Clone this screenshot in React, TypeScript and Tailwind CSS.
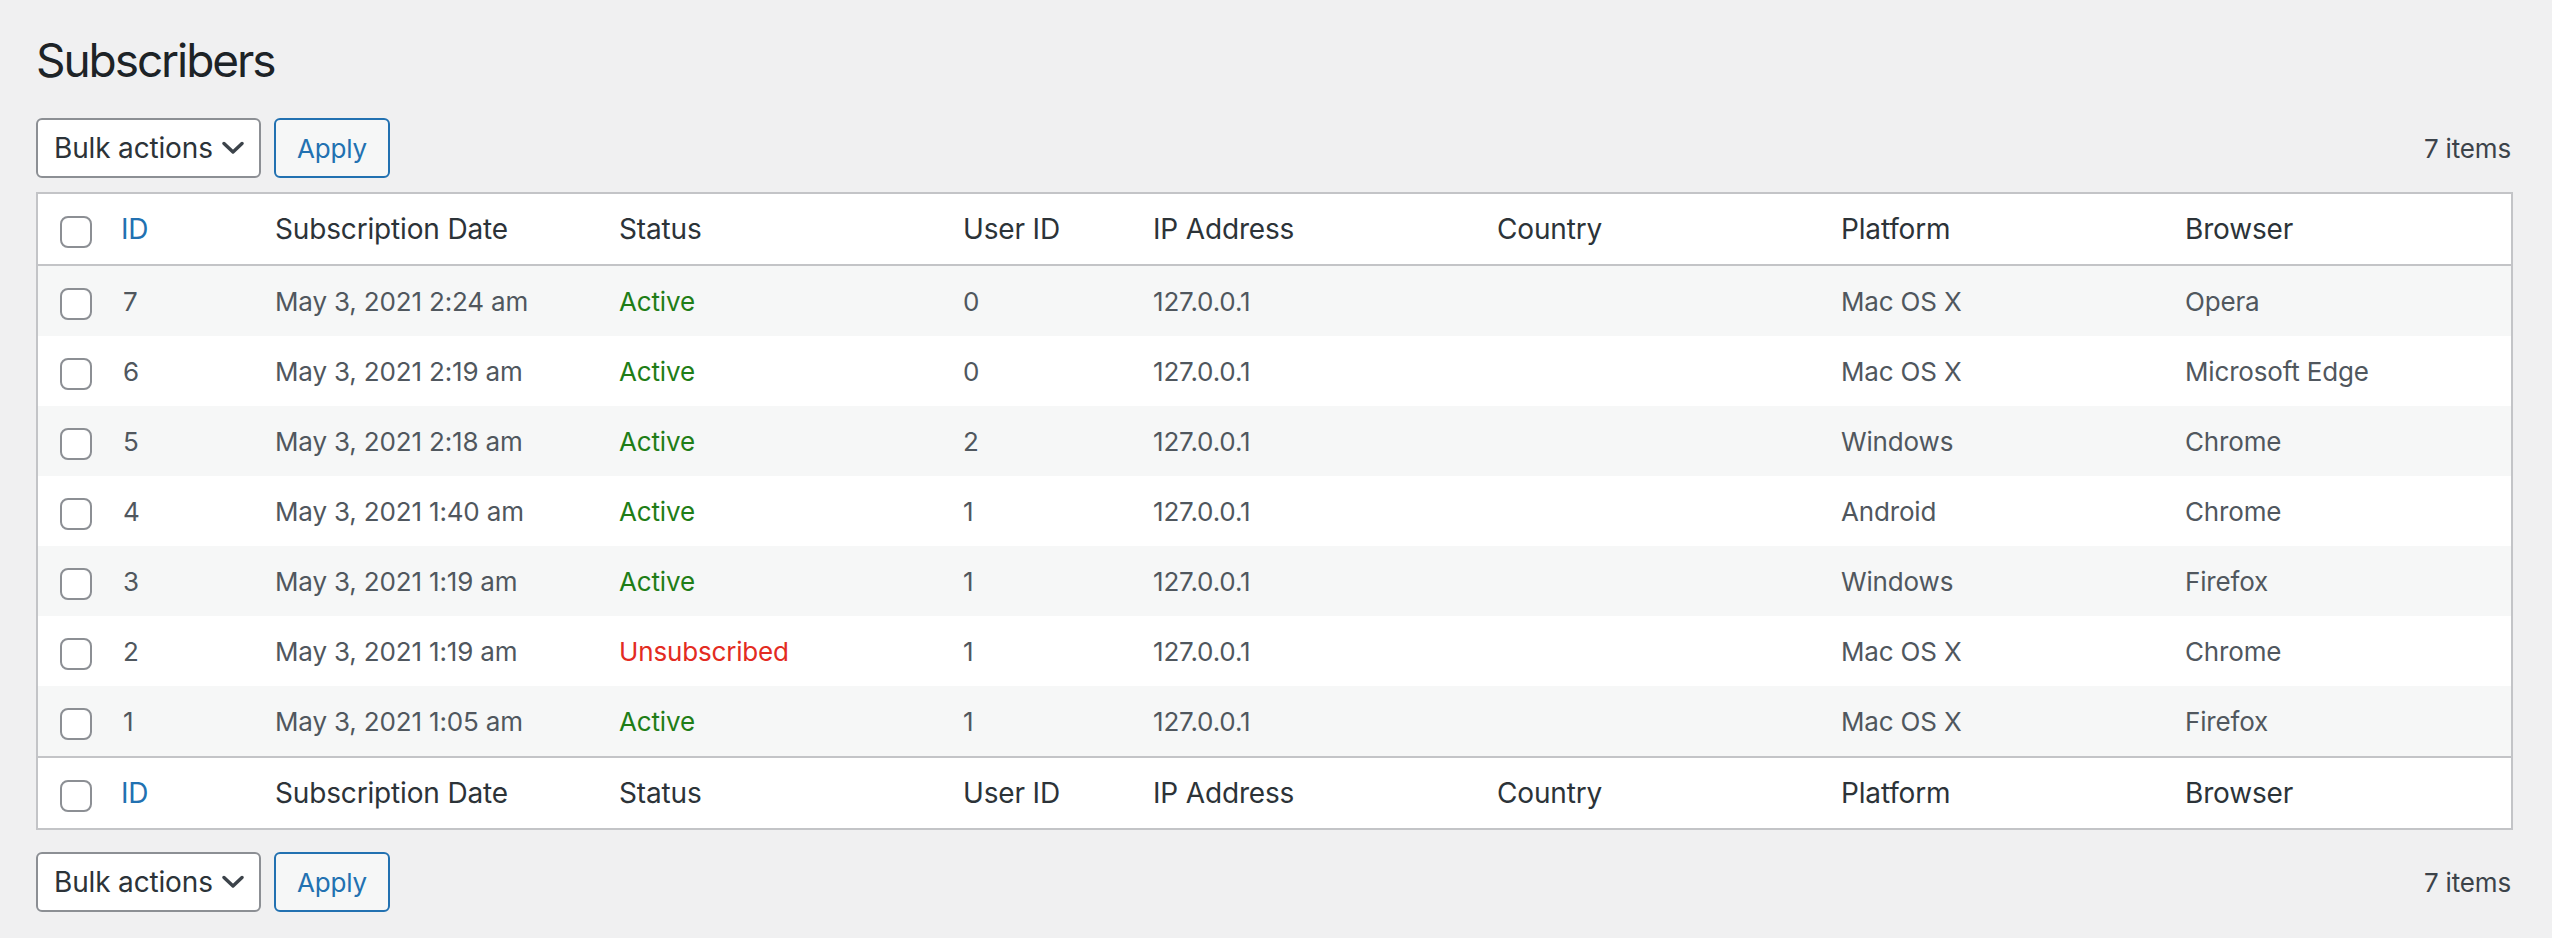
import React from "react";

type Row = {
  id: number;
  date: string;
  status: "Active" | "Unsubscribed";
  user: string;
  ip: string;
  country: string;
  platform: string;
  browser: string;
};

const rows: Row[] = [
  { id: 7, date: "May 3, 2021 2:24 am", status: "Active", user: "0", ip: "127.0.0.1", country: "", platform: "Mac OS X", browser: "Opera" },
  { id: 6, date: "May 3, 2021 2:19 am", status: "Active", user: "0", ip: "127.0.0.1", country: "", platform: "Mac OS X", browser: "Microsoft Edge" },
  { id: 5, date: "May 3, 2021 2:18 am", status: "Active", user: "2", ip: "127.0.0.1", country: "", platform: "Windows", browser: "Chrome" },
  { id: 4, date: "May 3, 2021 1:40 am", status: "Active", user: "1", ip: "127.0.0.1", country: "", platform: "Android", browser: "Chrome" },
  { id: 3, date: "May 3, 2021 1:19 am", status: "Active", user: "1", ip: "127.0.0.1", country: "", platform: "Windows", browser: "Firefox" },
  { id: 2, date: "May 3, 2021 1:19 am", status: "Unsubscribed", user: "1", ip: "127.0.0.1", country: "", platform: "Mac OS X", browser: "Chrome" },
  { id: 1, date: "May 3, 2021 1:05 am", status: "Active", user: "1", ip: "127.0.0.1", country: "", platform: "Mac OS X", browser: "Firefox" },
];

const GRID =
  "grid grid-cols-[63px_154px_344px_344px_190px_344px_344px_344px_1fr]";

function Checkbox() {
  return (
    <span className="mt-[5px] block h-[32px] w-[32px] rounded-[8px] border-2 border-[#8c8f94] bg-white" />
  );
}

function Chevron() {
  return (
    <svg width="22" height="14" viewBox="0 0 22 14" fill="none" className="shrink-0">
      <path d="M2 2.5 L11 11 L20 2.5" stroke="#3c434a" strokeWidth="3.4" strokeLinecap="round" strokeLinejoin="round" />
    </svg>
  );
}

function TableNav() {
  return (
    <div className="flex h-[60px] items-center justify-between">
      <div className="flex items-center gap-[13px]">
        <div className="flex h-[60px] w-[225px] items-center justify-between rounded-[6px] border-2 border-[#8c8f94] bg-white pl-[16px] pr-[15px] text-[28px] text-[#2c3338]">
          <span>Bulk actions</span>
          <Chevron />
        </div>
        <div className="flex h-[60px] items-center rounded-[6px] border-2 border-[#2271b1] bg-[#f6f7f7] px-[21px] text-[26px] text-[#2271b1]">
          Apply
        </div>
      </div>
      <div className="mr-[2px] text-[26px] text-[#3c434a]">7 items</div>
    </div>
  );
}

function HeaderRow({ top }: { top: boolean }) {
  const cls = "flex items-center pl-[20px]";
  return (
    <div
      className={`${GRID} h-[72px] text-[28px] text-[#2c3338] ${
        top ? "border-b-2" : "border-t-2"
      } border-[#c3c4c7]`}
    >
      <div className="flex items-center pl-[22px]">
        <Checkbox />
      </div>
      <div className={`${cls} text-[#2271b1]`}>ID</div>
      <div className={cls}>Subscription Date</div>
      <div className={cls}>Status</div>
      <div className={cls}>User ID</div>
      <div className={cls}>IP Address</div>
      <div className={cls}>Country</div>
      <div className={cls}>Platform</div>
      <div className={cls}>Browser</div>
    </div>
  );
}

export default function App() {
  const cell = "flex items-center pl-[20px]";
  return (
    <div className="min-h-[938px] bg-[#f0f0f1] pl-[36px] pr-[39px] pt-[30px] font-['Inter','Liberation_Sans',sans-serif] tracking-[-0.01em]">
      <h1 className="text-[46px] leading-[60px] font-normal tracking-[-0.045em] text-[#1d2327]">Subscribers</h1>
      <div className="mt-[28px]">
        <TableNav />
      </div>
      <div className="mt-[14px] border-2 border-[#c3c4c7] bg-white">
        <HeaderRow top={true} />
        {rows.map((r, i) => (
          <div
            key={r.id}
            className={`${GRID} h-[70px] text-[26px] text-[#50575e] ${
              i % 2 === 0 ? "bg-[#f6f7f7]" : "bg-white"
            }`}
          >
            <div className="flex items-center pl-[22px]">
              <Checkbox />
            </div>
            <div className="flex items-center pl-[22px]">{r.id}</div>
            <div className={cell}>{r.date}</div>
            <div
              className={`${cell} ${
                r.status === "Active" ? "text-[#1f7d16]" : "text-[#e32b22]"
              }`}
            >
              {r.status}
            </div>
            <div className={cell}>{r.user}</div>
            <div className={cell}>{r.ip}</div>
            <div className={cell}>{r.country}</div>
            <div className={cell}>{r.platform}</div>
            <div className={cell}>{r.browser}</div>
          </div>
        ))}
        <HeaderRow top={false} />
      </div>
      <div className="mt-[22px]">
        <TableNav />
      </div>
    </div>
  );
}
